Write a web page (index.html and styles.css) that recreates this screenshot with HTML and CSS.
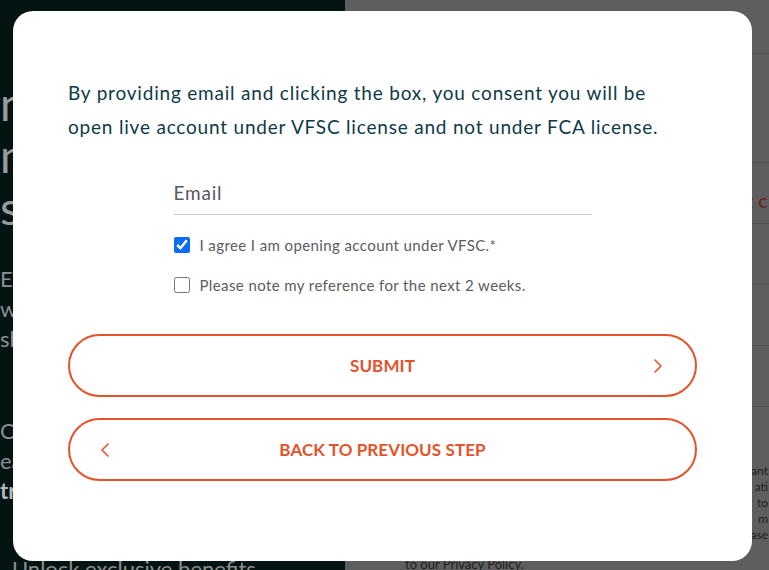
FILE: index.html
```html
<!DOCTYPE html>
<html lang="en">
<head>
<meta charset="utf-8">
<title>VFSC consent</title>
<link rel="stylesheet" href="styles.css">
</head>
<body>
<div class="page">
  <aside class="hero">
    <div class="hero-title">
      <span>nl</span>
      <span>m</span>
      <span>st</span>
    </div>
    <div class="hero-copy">
      <span>Ex</span>
      <span>wi</span>
      <span>sh</span>
    </div>
    <div class="hero-copy second">
      <span>Co</span>
      <span>ea</span>
      <span class="strong">tr</span>
    </div>
    <div class="hero-foot">Unlock exclusive benefits</div>
  </aside>
  <main class="side">
    <div class="side-top"></div>
    <div class="side-row"></div>
    <div class="side-row side-row-red"><span class="side-red">E C</span></div>
    <div class="side-row"></div>
    <div class="side-row"></div>
    <div class="side-row"></div>
    <div class="side-text">
      <span>ant</span>
      <span>ati</span>
      <span>to</span>
      <span>m</span>
      <span>ase</span>
    </div>
    <div class="side-foot">to our <u>Privacy Policy</u>.</div>
  </main>
</div>

<div class="modal">
  <p class="intro">By providing email and clicking the box, you consent you will be open live account under VFSC license and not under FCA license.</p>
  <form class="form">
    <label class="field">
      <span class="field-label">Email</span>
    </label>
    <label class="check">
      <input type="checkbox" checked>
      <span>I agree I am opening account under VFSC.*</span>
    </label>
    <label class="check">
      <input type="checkbox">
      <span>Please note my reference for the next 2 weeks.</span>
    </label>
  </form>
  <button class="btn" type="button">
    <span class="btn-text">SUBMIT</span>
    <svg class="chev chev-right" width="10" height="16" viewBox="0 0 10 16"><path d="M2 2 L8 8 L2 14" fill="none" stroke="#e5532a" stroke-width="1.6" stroke-linecap="round" stroke-linejoin="round"/></svg>
  </button>
  <button class="btn btn-back" type="button">
    <svg class="chev chev-left" width="10" height="16" viewBox="0 0 10 16"><path d="M8 2 L2 8 L8 14" fill="none" stroke="#e5532a" stroke-width="1.6" stroke-linecap="round" stroke-linejoin="round"/></svg>
    <span class="btn-text">BACK TO PREVIOUS STEP</span>
  </button>
</div>
</body>
</html>
```
FILE: styles.css
```css
* { box-sizing: border-box; }
html, body { margin: 0; padding: 0; }
body {
  width: 769px;
  height: 570px;
  overflow: hidden;
  font-family: "Lato", "Noto Sans", sans-serif;
  background: #5d5e5d;
}
.page {
  display: flex;
  height: 570px;
}
.hero {
  width: 345px;
  background: #041413;
  color: #8d8f8e;
  display: flex;
  flex-direction: column;
  padding-top: 78px;
}
.hero-title {
  display: flex;
  flex-direction: column;
  font-size: 46px;
  line-height: 52px;
  color: #9a9c9b;
}
.hero-copy {
  display: flex;
  flex-direction: column;
  font-size: 22px;
  line-height: 30px;
  margin-top: 30px;
}
.hero-copy.second { margin-top: 62px; }
.strong { font-weight: 700; color: #b8bab9; }
.hero-foot {
  margin-top: auto;
  font-size: 22px;
  line-height: 18px;
  padding-left: 12px;
  color: #8d8f8e;
  height: 10px;
}
.side {
  flex: 1;
  display: flex;
  flex-direction: column;
  background: #5d5e5d;
}
.side-top { height: 54px; border-bottom: 1px solid #515251; }
.side-row {
  height: 61px;
  border-bottom: 1px solid #515251;
  display: flex;
  align-items: center;
  justify-content: flex-end;
}
.side-row:nth-child(2) { height: 109px; }
.side-row-red { padding-top: 20px; }
.side-red {
  color: #6e2214;
  font-weight: 700;
  font-size: 13px;
  letter-spacing: 1px;
  padding-right: 1px;
}
.side-text {
  display: flex;
  flex-direction: column;
  align-items: flex-end;
  margin-top: 56px;
  font-size: 12px;
  line-height: 16px;
  color: #1e1f1e;
  padding-right: 1px;
}
.side-foot {
  margin-top: auto;
  padding-left: 60px;
  font-size: 13px;
  height: 10px;
  line-height: 8px;
  color: #1e1f1e;
}

.modal {
  position: absolute;
  left: 13px;
  top: 11px;
  width: 739px;
  height: 550px;
  background: #ffffff;
  border-radius: 20px;
  padding: 65px 55px 0;
  display: flex;
  flex-direction: column;
}
.intro {
  margin: 0;
  font-size: 19px;
  line-height: 34px;
  letter-spacing: 0.8px;
  color: #0e3a47;
}
.form {
  width: 418px;
  align-self: center;
  display: flex;
  flex-direction: column;
  margin: 37px 0 0;
}
.field {
  display: block;
  border-bottom: 1px solid #c9c9c9;
  padding-bottom: 9px;
}
.field-label {
  display: block;
  font-size: 19px;
  line-height: 24px;
  letter-spacing: 0.8px;
  color: #555a5c;
}
.check {
  display: flex;
  align-items: center;
  height: 20px;
  margin-top: 20px;
  gap: 10px;
  font-size: 15px;
  letter-spacing: 0.4px;
  color: #5a5d5e;
}
.check input {
  width: 16px;
  height: 16px;
  margin: 0;
  accent-color: #0b6cf5;
}
.btn {
  position: relative;
  display: flex;
  align-items: center;
  justify-content: center;
  height: 63px;
  border: 2px solid #e5532a;
  border-radius: 32px;
  background: #fff;
  font-family: inherit;
  padding: 0 32px;
  margin-top: 39px;
}
.btn-back { margin-top: 21px; }
.btn-text {
  font-size: 17px;
  font-weight: 700;
  color: #e5532a;
  letter-spacing: 0.1px;
}
.chev {
  position: absolute;
  top: 50%;
  margin-top: -8px;
}
.chev-right { right: 32px; }
.chev-left { left: 30px; }
```
